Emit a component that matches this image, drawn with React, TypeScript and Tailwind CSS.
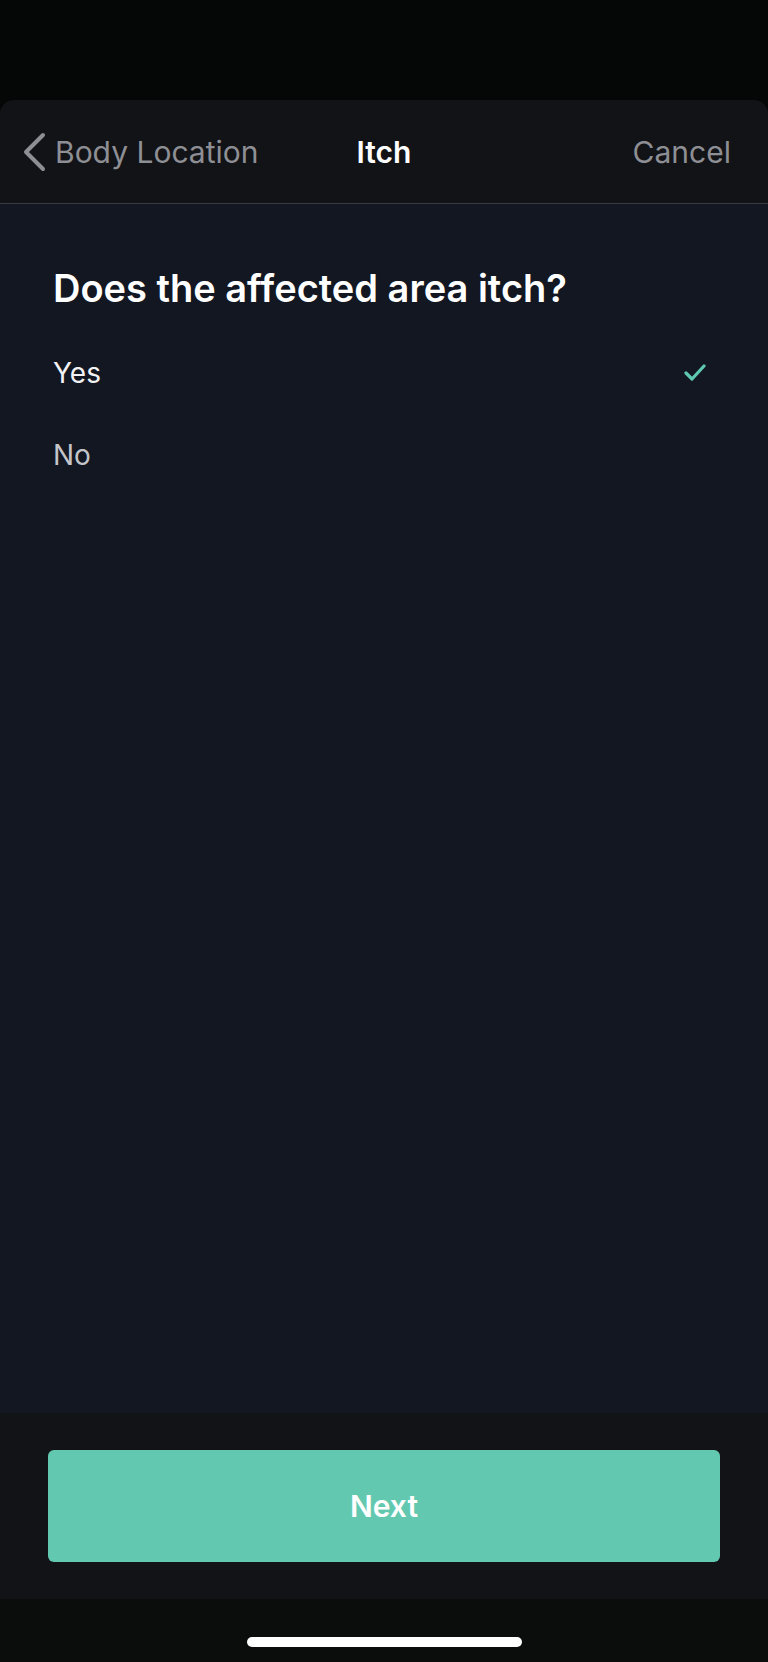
import React, { useState } from 'react';

const options = ['Yes', 'No'];

export default function App() {
  const [selected, setSelected] = useState('Yes');

  return (
    <div className="flex h-[1662px] w-[768px] flex-col bg-[#040706] font-['Inter',sans-serif]">
      {/* Status bar spacer */}
      <div className="h-[100px] shrink-0"></div>

      {/* Sheet */}
      <div className="flex flex-1 flex-col overflow-hidden rounded-t-[14px] bg-[#121317]">
        {/* Nav bar */}
        <div className="relative flex h-[104px] shrink-0 items-center justify-between border-b border-[#3a3b40] pl-[22px] pr-[37px]">
          <button className="flex items-center gap-[7px] text-[#8e8f94]">
            <svg width="26" height="40" viewBox="0 0 26 40" fill="none">
              <path d="M21 3 L4 20 L21 37" stroke="currentColor" strokeWidth="4" strokeLinecap="round" strokeLinejoin="round" />
            </svg>
            <span className="text-[30px] leading-none">Body Location</span>
          </button>
          <span className="absolute left-1/2 -translate-x-1/2 text-[30px] font-semibold leading-none text-white">Itch</span>
          <button className="text-[30px] leading-none text-[#8e8f94]">Cancel</button>
        </div>

        {/* Question */}
        <div className="flex flex-1 flex-col bg-[#121721] pl-[53px] pr-[62px] pt-[65px]">
          <h1 className="text-[38px] font-semibold leading-none text-white">Does the affected area itch?</h1>
          <div className="mt-[25px] flex flex-col">
            {options.map((opt) => (
              <button
                key={opt}
                onClick={() => setSelected(opt)}
                className="flex h-[82px] items-center justify-between text-left"
              >
                <span className={`text-[28px] leading-none ${opt === selected ? 'text-[#f2f2f5]' : 'text-[#c4c5ca]'}`}>{opt}</span>
                {opt === selected && (
                  <svg width="22" height="18" viewBox="0 0 22 18" fill="none">
                    <path d="M2 9 L8 15 L20 2" stroke="#5ec9b0" strokeWidth="3.2" strokeLinecap="round" strokeLinejoin="round" />
                  </svg>
                )}
              </button>
            ))}
          </div>
        </div>

        {/* Footer */}
        <div className="flex h-[186px] shrink-0 items-start bg-[#121317] px-[48px] pt-[37px]">
          <button className="flex h-[112px] w-full items-center justify-center rounded-[6px] bg-[#62c9b0] text-[30px] font-semibold text-white">
            Next
          </button>
        </div>

        {/* Home indicator */}
        <div className="flex h-[63px] shrink-0 items-start justify-center bg-[#0b0c0c] pt-[38px]">
          <div className="h-[10px] w-[275px] rounded-full bg-white"></div>
        </div>
      </div>
    </div>
  );
}
